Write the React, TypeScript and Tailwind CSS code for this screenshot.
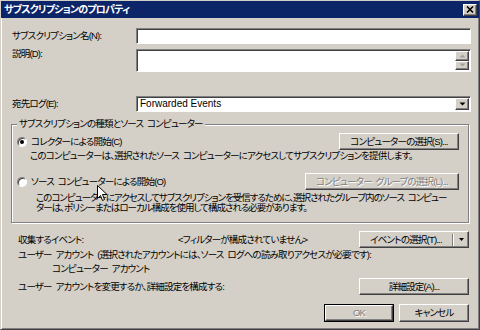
import React from "react";

const FACE = "bg-[#d4d0c8]";

const Btn: React.FC<{
  label: string;
  width: string;
  disabled?: boolean;
  isDefault?: boolean;
  split?: boolean;
}> = ({ label, width, disabled, isDefault, split }) => {
  const inner = (
    <div
      className={`h-full flex items-center ${FACE} border border-t-white border-l-white border-r-[#404040] border-b-[#404040] shadow-[inset_-1px_-1px_0_#808080]`}
    >
      <span
        className={`flex-1 text-center leading-[12px] whitespace-nowrap ${
          disabled ? "text-[#808080] [text-shadow:1px_1px_0_#fff]" : "text-black"
        }`}
      >
        {label}
      </span>
      {split && (
        <div className="h-full flex items-center gap-[3px] pr-[3px]">
          <div className="w-[1px] h-[12px] bg-[#808080] shadow-[1px_0_0_#fff]" />
          <svg width="7" height="4" viewBox="0 0 7 4" className="ml-[2px]">
            <path d="M1 0h5L3.5 3z" fill="#000" />
          </svg>
        </div>
      )}
    </div>
  );
  return (
    <div className={`${width} shrink-0 h-full ${isDefault ? "border border-black" : ""}`}>
      {inner}
    </div>
  );
};

const Sunken: React.FC<{ className?: string; children?: React.ReactNode }> = ({
  className,
  children,
}) => (
  <div
    className={`bg-white border border-t-[#808080] border-l-[#808080] border-r-white border-b-white shadow-[inset_1px_1px_0_#404040] ${className ?? ""}`}
  >
    {children}
  </div>
);

const SmallBtn: React.FC<{ up?: boolean; dark?: boolean; className?: string }> = ({
  up,
  dark,
  className,
}) => (
  <div
    className={`w-[14px] flex items-center justify-center ${FACE} border border-t-white border-l-white border-r-[#404040] border-b-[#404040] shadow-[inset_-1px_-1px_0_#808080] ${className ?? ""}`}
  >
    <svg width="7" height="4" viewBox="0 0 7 4">
      <path
        d={up ? "M3.5 0.5L6.5 3.5h-6z" : "M0.5 0.5h6l-3 3z"}
        fill={dark ? "#000" : "#a0a0a0"}
      />
    </svg>
  </div>
);

const Radio: React.FC<{ checked?: boolean }> = ({ checked }) => (
  <div className="w-[10px] h-[10px] shrink-0 rounded-full bg-white border border-t-[#808080] border-l-[#808080] border-r-white border-b-white shadow-[inset_1px_1px_0_#404040] flex items-center justify-center">
    {checked && <div className="w-[4px] h-[4px] rounded-full bg-black" />}
  </div>
);

export default function App() {
  return (
    <div className="w-[480px] h-[330px] overflow-hidden relative font-['Liberation_Sans','Noto_Sans_CJK_JP',sans-serif] [font-feature-settings:'palt'] text-[9.5px] tracking-[-0.8px] [word-spacing:2px] text-black">
      <div
        className={`w-full h-full flex flex-col ${FACE} border border-t-[#d4d0c8] border-l-[#d4d0c8] border-r-[#404040] border-b-[#404040] shadow-[inset_1px_1px_0_#fff,inset_-1px_-1px_0_#808080]`}
      >
        {/* title bar */}
        <div className="h-[17px] bg-[#0c2468] flex items-center pl-[3px] pr-[2px]">
          <span className="flex-1 text-white font-bold text-[10px] leading-[12px] tracking-[-0.8px]">
            サブスクリプションのプロパティ
          </span>
          <div
            className={`w-[14px] h-[12px] flex items-center justify-center ${FACE} border border-t-white border-l-white border-r-[#404040] border-b-[#404040] shadow-[inset_-1px_-1px_0_#808080]`}
          >
            <svg width="8" height="7" viewBox="0 0 8 7">
              <path d="M1 0.5l6 6M7 0.5l-6 6" stroke="#000" strokeWidth="1.6" />
            </svg>
          </div>
        </div>

        {/* name */}
        <div className="mt-[10px] h-[16px] flex items-center pl-[11px] pr-[8px]">
          <span className="w-[124px] leading-[12px]">サブスクリプション名(N):</span>
          <Sunken className="flex-1 h-full" />
        </div>

        {/* description */}
        <div className="mt-[5px] h-[23px] flex items-start pl-[11px] pr-[8px]">
          <span className="w-[124px] leading-[12px] mt-[-1px]">説明(D):</span>
          <Sunken className="flex-1 h-full flex justify-end p-[1px]">
            <div className="flex flex-col">
              <SmallBtn up className="h-[10px]" />
              <SmallBtn className="h-[10px]" />
            </div>
          </Sunken>
        </div>

        {/* destination log */}
        <div className="mt-[24px] h-[16px] flex items-center pl-[11px] pr-[8px]">
          <span className="w-[124px] leading-[12px]">宛先ログ(E):</span>
          <Sunken className="flex-1 h-full flex items-center p-[1px]">
            <span className="flex-1 pl-[2px] leading-[12px] text-[10px] tracking-[0px] [word-spacing:0px]">
              Forwarded Events
            </span>
            <SmallBtn dark className="h-full" />
          </Sunken>
        </div>

        {/* group box */}
        <fieldset className="min-w-0 mt-[6px] mx-[10px] border border-[#808080] shadow-[1px_1px_0_#fff,inset_1px_1px_0_#fff] pl-[5px] pr-[9px] pb-[9px]">
          <legend className={`px-[2px] leading-[12px] ml-0 ${FACE}`}>
            サブスクリプションの種類とソース コンピューター
          </legend>
          <div className="mt-[3px] h-[17px] flex items-center">
            <Radio checked />
            <span className="ml-[4px] flex-1 leading-[12px] mt-[1px]">
              コレクターによる開始(C)
            </span>
            <Btn label="コンピューターの選択(S)..." width="w-[120px]" />
          </div>
          <div className="pl-[13px] leading-[12px] whitespace-nowrap">
            このコンピューターは、選択されたソース コンピューターにアクセスしてサブスクリプションを提供します。
          </div>
          <div className="mt-[11px] h-[17px] flex items-center">
            <Radio />
            <span className="ml-[4px] flex-1 leading-[12px]">
              ソース コンピューターによる開始(O)
            </span>
            <Btn
              label="コンピューター グループの選択(L)..."
              width="w-[154px]"
              disabled
            />
          </div>
          <div className="pl-[19px] mt-[3px] leading-[10px] whitespace-nowrap tracking-[-1px]">
            このコンピューターにアクセスしてサブスクリプションを受信するために、選択されたグループ内のソース コンピュー
            <br />
            ターは、ポリシーまたはローカル構成を使用して構成される必要があります。
          </div>
        </fieldset>

        {/* events */}
        <div className="mt-[8px] h-[17px] flex items-center pl-[17px] pr-[10px]">
          <span className="w-[160px] leading-[12px]">収集するイベント:</span>
          <span className="flex-1 leading-[12px]">&lt;フィルターが構成されていません&gt;</span>
          <Btn label="イベントの選択(T)..." width="w-[110px]" split />
        </div>
        <div className="pl-[17px] leading-[12px] mt-[1px]">
          ユーザー アカウント (選択されたアカウントには、ソース ログへの読み取りアクセスが必要です):
        </div>
        <div className="pl-[51px] leading-[12px] mt-[2px]">コンピューター アカウント</div>
        <div className="mt-[3px] h-[17px] flex items-center pl-[17px] pr-[10px]">
          <span className="flex-1 leading-[12px]">
            ユーザー アカウントを変更するか、詳細設定を構成する:
          </span>
          <Btn label="詳細設定(A)..." width="w-[110px]" />
        </div>

        {/* dialog buttons */}
        <div className="mt-[9px] h-[18px] flex justify-end gap-[5px] pr-[10px]">
          <Btn label="OK" width="w-[70px]" disabled isDefault />
          <Btn label="キャンセル" width="w-[70px]" />
        </div>
      </div>

      {/* mouse pointer */}
      <svg
        width="11"
        height="17"
        viewBox="0 0 11 17"
        className="absolute left-[97px] top-[185px]"
      >
        <path
          d="M0.5 0.5v13l3-3 2 5 2-1-2-5h4.5z"
          fill="#fff"
          stroke="#000"
          strokeWidth="1"
        />
      </svg>
    </div>
  );
}
